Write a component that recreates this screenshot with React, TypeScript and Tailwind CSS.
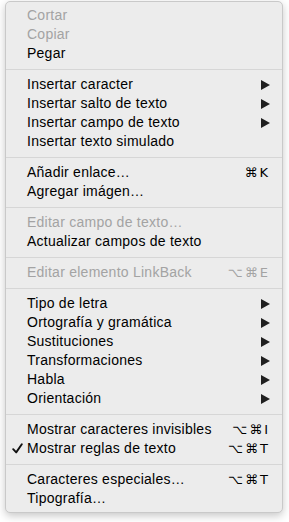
type Item =
  | { sep: true }
  | { label: string; disabled?: boolean; sub?: boolean; keys?: string; checked?: boolean; sep?: false };

const ITEMS: Item[] = [
  { label: 'Cortar', disabled: true },
  { label: 'Copiar', disabled: true },
  { label: 'Pegar' },
  { sep: true },
  { label: 'Insertar caracter', sub: true },
  { label: 'Insertar salto de texto', sub: true },
  { label: 'Insertar campo de texto', sub: true },
  { label: 'Insertar texto simulado' },
  { sep: true },
  { label: 'Añadir enlace…', keys: '⌘K' },
  { label: 'Agregar imágen…' },
  { sep: true },
  { label: 'Editar campo de texto…', disabled: true },
  { label: 'Actualizar campos de texto' },
  { sep: true },
  { label: 'Editar elemento LinkBack', disabled: true, keys: '⌥⌘E' },
  { sep: true },
  { label: 'Tipo de letra', sub: true },
  { label: 'Ortografía y gramática', sub: true },
  { label: 'Sustituciones', sub: true },
  { label: 'Transformaciones', sub: true },
  { label: 'Habla', sub: true },
  { label: 'Orientación', sub: true },
  { sep: true },
  { label: 'Mostrar caracteres invisibles', keys: '⌥⌘I' },
  { label: 'Mostrar reglas de texto', keys: '⌥⌘T', checked: true },
  { sep: true },
  { label: 'Caracteres especiales…', keys: '⌥⌘T' },
  { label: 'Tipografía…' },
];

function Arrow() {
  return (
    <svg width="9" height="10" viewBox="0 0 9 10" className="ml-[2px] shrink-0">
      <polygon points="0,0 9,5 0,10" fill="#1f1f1f" />
    </svg>
  );
}

function Check() {
  return (
    <svg width="11" height="11" viewBox="0 0 11 11" className="shrink-0">
      <path d="M1.2 6.2 L4.2 9.4 L9.8 1.2" fill="none" stroke="#111" strokeWidth="1.9" strokeLinecap="round" strokeLinejoin="round" />
    </svg>
  );
}

export default function App() {
  return (
    <div className="w-[289px] h-[522px] bg-white pt-px pl-[5px]">
      <div
        className="w-[278px] rounded-[5px] border border-[#c9c9c9] bg-[#ececec] py-[4px] shadow-[0_3px_8px_rgba(0,0,0,0.22)] text-[14px] tracking-[0.25px]"
        style={{ fontFamily: '"Liberation Sans", Arial, sans-serif' }}
      >
        {ITEMS.map((it, i) =>
          it.sep ? (
            <div key={i} className="h-[12px] flex items-center">
              <div className="h-px w-full bg-[#d6d6d6]" />
            </div>
          ) : (
            <div
              key={i}
              className={`h-[19px] flex items-center pr-[12px] ${
                it.disabled ? 'text-[#a3a3a3]' : 'text-black'
              }`}
            >
              <span className="w-[21px] pl-[6px] shrink-0 flex items-center">
                {it.checked ? <Check /> : null}
              </span>
              <span className="flex-1 whitespace-nowrap">{it.label}</span>
              {it.sub ? <Arrow /> : null}
              {it.keys ? (
                <span
                  className="tracking-[2px]"
                  style={{ fontFamily: '"DejaVu Sans", sans-serif', fontSize: '13px' }}
                >
                  {it.keys}
                </span>
              ) : null}
            </div>
          )
        )}
      </div>
    </div>
  );
}
